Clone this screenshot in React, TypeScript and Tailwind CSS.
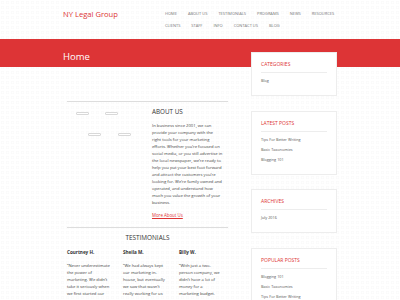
const navTop = ["Home", "About Us", "Testimonials", "Programs", "News", "Resources"];
const navBottom = ["Clients", "Staff", "Info", "Contact Us", "Blog"];

const aboutLines = [
  "In business since 2001, we can",
  "provide your company with the",
  "right tools for your marketing",
  "efforts. Whether you’re focused on",
  "social media, or you still advertise in",
  "the local newspaper, we’re ready to",
  "help you put your best foot forward",
  "and attract the customers you’re",
  "looking for. We’re family owned and",
  "operated, and understand how",
  "much you value the growth of your",
  "business.",
];

const testimonials = [
  {
    name: "Courtney H.",
    lines: ["“Never underestimate", "the power of", "marketing. We didn’t", "take it seriously when", "we first started our"],
  },
  {
    name: "Sheila M.",
    lines: ["“We had always kept", "our marketing in-", "house, but eventually", "we saw that wasn’t", "really working for us"],
  },
  {
    name: "Billy W.",
    lines: ["“With just a two-", "person company, we", "didn’t have a lot of", "money for a", "marketing budget."],
  },
];

const widgets = [
  { title: "Categories", items: ["Blog"] },
  { title: "Latest Posts", items: ["Tips For Better Writing", "Basic Taxonomies", "Blogging 101"] },
  { title: "Archives", items: ["July 2016"] },
  { title: "Popular Posts", items: ["Blogging 101", "Basic Taxonomies", "Tips For Better Writing"] },
];

const Widget = ({ title, items }: { title: string; items: string[] }) => (
  <div className="bg-white border border-[#ededed] px-[9px] pt-[8px] pb-[9px]">
    <div className="text-[5px] leading-[6px] uppercase text-[#dd3333] pb-[5px] border-b border-[#ededed]">
      {title}
    </div>
    <div className="mt-[3px]">
      {items.map((item) => (
        <div key={item} className="text-[3.8px] leading-[10px] text-[#555]">
          {item}
        </div>
      ))}
    </div>
  </div>
);

const Placeholder = () => (
  <div className="w-[13px] h-[3px] border border-[#d8d8d8] rounded-[1px] bg-white" />
);

export default function App() {
  return (
    <div className="w-[400px] min-h-[300px] overflow-hidden font-['Open_Sans',sans-serif] bg-white bg-[radial-gradient(circle,transparent_0.8px,#f7f7f7_1.2px,transparent_1.8px)] bg-[length:5px_5px]">
      <header className="w-[274px] mx-auto h-[39px] flex justify-between">
        <div className="pt-[9px] text-[7.6px] leading-[10px] text-[#dd3333]">NY Legal Group</div>
        <nav className="w-[172px] pt-[12px] text-[4px] leading-[4px] uppercase text-[#777]">
          <div className="flex gap-x-[11px]">
            {navTop.map((n) => (
              <span key={n}>{n}</span>
            ))}
          </div>
          <div className="flex gap-x-[11px] mt-[7.5px]">
            {navBottom.map((n) => (
              <span key={n}>{n}</span>
            ))}
          </div>
        </nav>
      </header>

      <div className="h-[28px] bg-[#dd3436]">
        <div className="w-[274px] mx-auto pt-[12px] text-[9.5px] leading-[12px] text-white">Home</div>
      </div>

      <div className="w-[274px] mx-auto flex justify-between">
        <main className="w-[161px] ml-[4px] mt-[34px]">
          <div className="border-t border-[#ddd] flex pt-[6px] pb-[8px]">
            <div className="w-[85px] pt-[4px]">
              <div className="flex gap-[16px] pl-[9px]">
                <Placeholder />
                <Placeholder />
              </div>
              <div className="flex gap-[17px] pl-[21px] mt-[18px]">
                <Placeholder />
                <Placeholder />
              </div>
            </div>
            <div className="flex-1">
              <h2 className="text-[6.3px] leading-[8px] uppercase text-[#333]">About Us</h2>
              <p className="mt-[6px] text-[4.2px] leading-[7px] text-[#444] whitespace-nowrap">
                {aboutLines.map((l, i) => (
                  <span key={i} className="block">
                    {l}
                  </span>
                ))}
              </p>
              <a href="#" className="block mt-[6px] text-[4.4px] leading-[7px] text-[#dd3333] underline">
                More About Us
              </a>
            </div>
          </div>
          <div className="border-t border-[#ddd] pt-[6px]">
            <h2 className="text-center text-[6.4px] leading-[8px] uppercase text-[#333]">Testimonials</h2>
            <div className="grid grid-cols-3 gap-x-[7px] mt-[7px]">
              {testimonials.map((t) => (
                <div key={t.name}>
                  <div className="text-[4.6px] leading-[7px] font-bold text-[#333]">{t.name}</div>
                  <div className="mt-[6px] text-[4.2px] leading-[7px] text-[#444] whitespace-nowrap">
                    {t.lines.map((l, i) => (
                      <span key={i} className="block">
                        {l}
                      </span>
                    ))}
                  </div>
                </div>
              ))}
            </div>
          </div>
        </main>

        <aside className="w-[86px] -mt-[15px] flex flex-col gap-[14.5px]">
          {widgets.map((w) => (
            <Widget key={w.title} title={w.title} items={w.items} />
          ))}
        </aside>
      </div>
    </div>
  );
}
